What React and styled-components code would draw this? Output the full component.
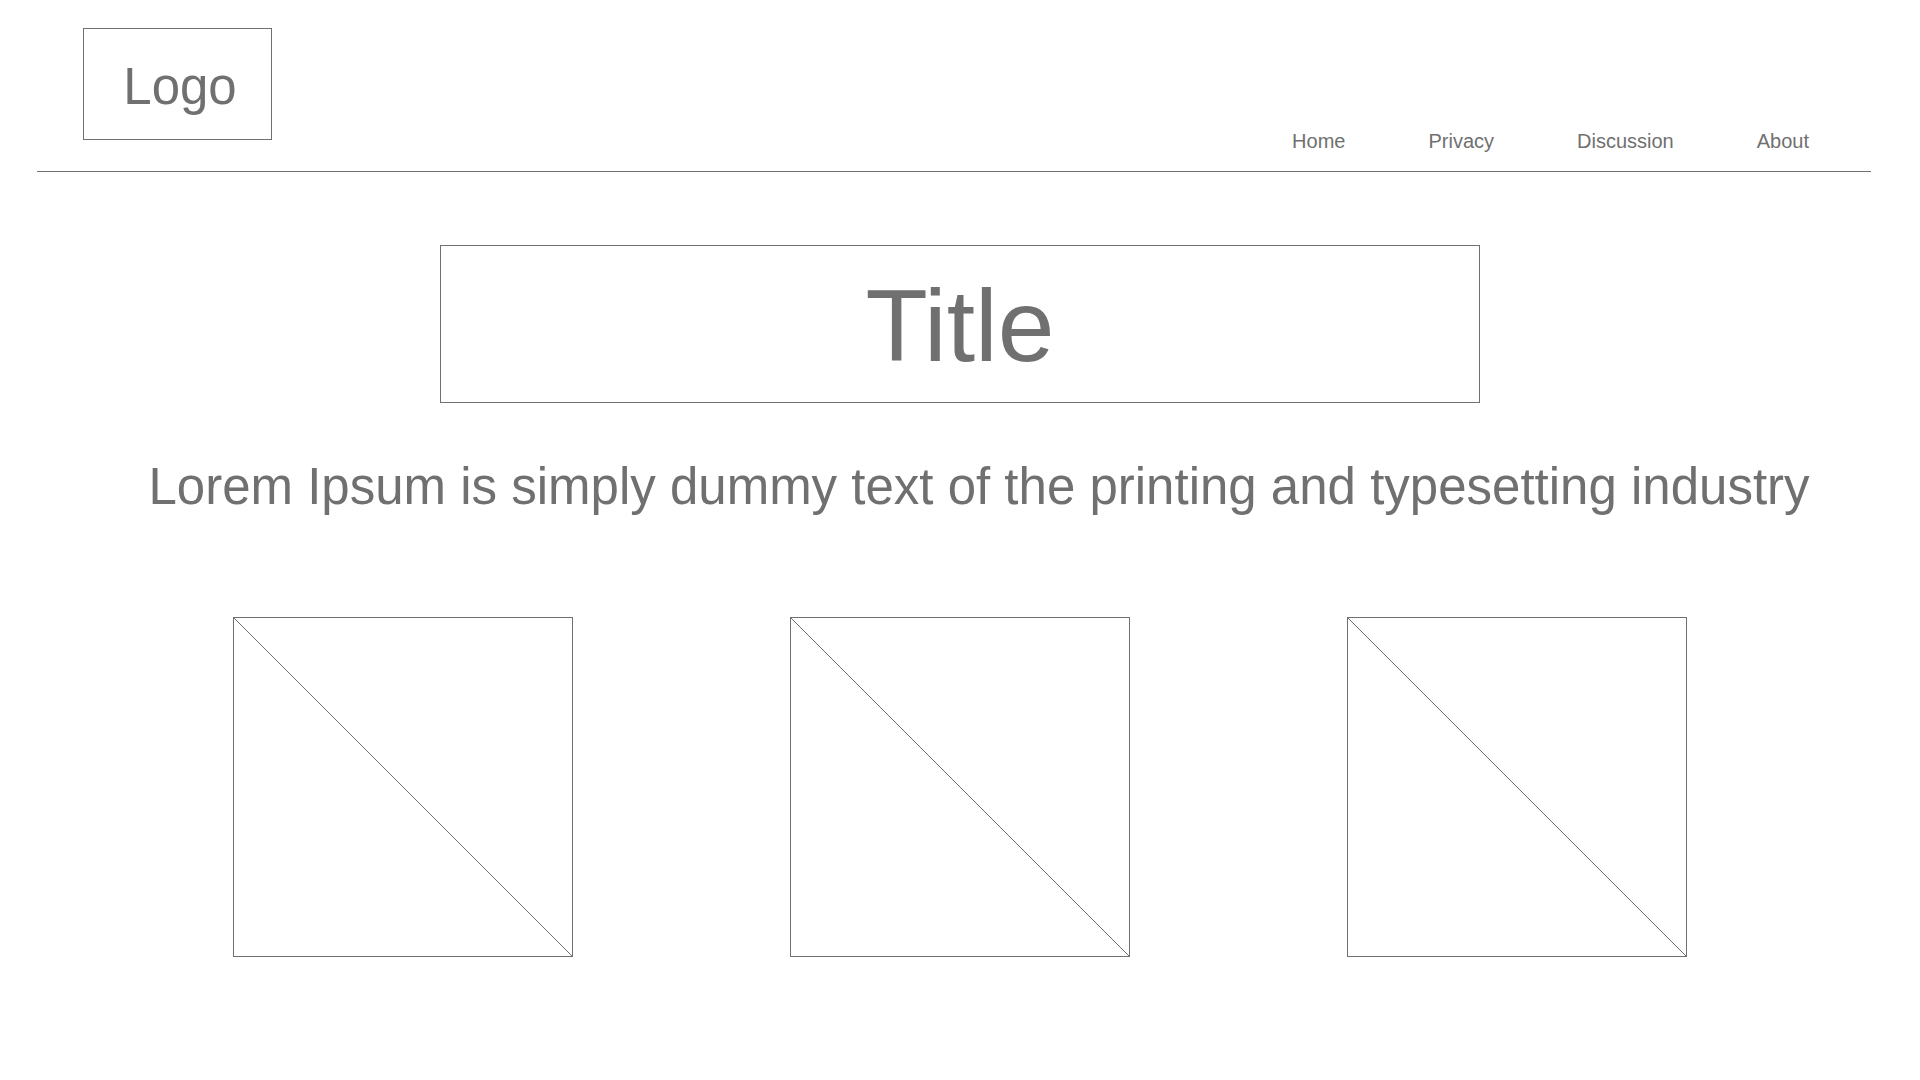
import React from "react";
import styled, { createGlobalStyle } from "styled-components";

const GREY = "#707070";

const Global = createGlobalStyle`
  html, body {
    margin: 0;
    padding: 0;
    background: #ffffff;
  }
  body {
    font-family: "Liberation Sans", Arial, Helvetica, sans-serif;
    color: ${GREY};
  }
`;

const Page = styled.div`
  width: 1920px;
  min-height: 1080px;
  box-sizing: border-box;
`;

const Header = styled.header`
  margin-left: 37px;
  width: 1834px;
  box-sizing: border-box;
  padding: 28px 62px 11px 46px;
  border-bottom: 1px solid ${GREY};
  display: flex;
  justify-content: space-between;
  align-items: flex-start;
`;

const LogoBox = styled.div`
  width: 189px;
  height: 112px;
  box-sizing: border-box;
  border: 1px solid ${GREY};
  margin-bottom: 20px;
  display: flex;
  align-items: center;
  justify-content: center;
  font-size: 51px;
  line-height: 51px;
  padding-left: 5px;
  padding-top: 4px;
`;

const Nav = styled.nav`
  align-self: flex-end;
  margin-bottom: 9px;
  display: flex;
  gap: 83px;
`;

const NavLink = styled.a`
  font-size: 20px;
  line-height: 20px;
  color: ${GREY};
  text-decoration: none;
`;

const Main = styled.main`
  display: flex;
  flex-direction: column;
  align-items: center;
  padding-top: 73px;
`;

const TitleBox = styled.div`
  width: 1040px;
  height: 158px;
  box-sizing: border-box;
  border: 1px solid ${GREY};
  padding-top: 29px;
  text-align: center;
  font-size: 102px;
  line-height: 102px;
`;

const Lead = styled.p`
  margin: 58px 0 0;
  font-size: 51px;
  line-height: 51px;
  padding-left: 38px;
  white-space: nowrap;
`;

const Gallery = styled.div`
  margin-top: 105px;
  display: flex;
  gap: 217px;
`;

const Placeholder = styled.div`
  width: 340px;
  height: 340px;
  box-sizing: border-box;
  border: 1px solid ${GREY};
  svg {
    display: block;
    width: 100%;
    height: 100%;
  }
`;

function ImagePlaceholder() {
  return (
    <Placeholder>
      <svg viewBox="0 0 338 338" preserveAspectRatio="none">
        <line x1="0" y1="0" x2="338" y2="338" stroke={GREY} strokeWidth="1" />
      </svg>
    </Placeholder>
  );
}

export default function App() {
  return (
    <Page>
      <Global />
      <Header>
        <LogoBox>Logo</LogoBox>
        <Nav>
          <NavLink href="#">Home</NavLink>
          <NavLink href="#">Privacy</NavLink>
          <NavLink href="#">Discussion</NavLink>
          <NavLink href="#">About</NavLink>
        </Nav>
      </Header>
      <Main>
        <TitleBox>Title</TitleBox>
        <Lead>Lorem Ipsum is simply dummy text of the printing and typesetting industry</Lead>
        <Gallery>
          <ImagePlaceholder />
          <ImagePlaceholder />
          <ImagePlaceholder />
        </Gallery>
      </Main>
    </Page>
  );
}
